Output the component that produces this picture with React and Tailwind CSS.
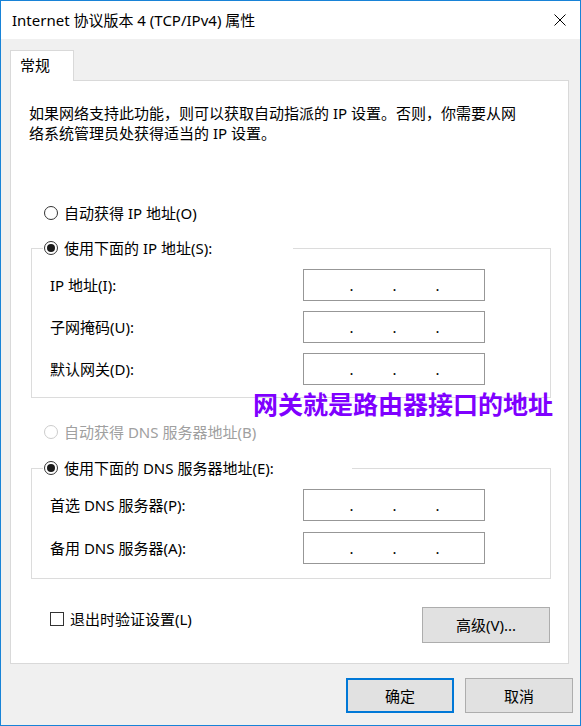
import React from 'react';

function Radio({ checked, disabled, label }) {
  return (
    <div className={`flex items-center h-[20px] ${disabled ? 'text-[#a0a0a0]' : 'text-black'}`}>
      <span
        className={`w-[14px] h-[14px] rounded-full border bg-white flex items-center justify-center ${disabled ? 'border-[#cccccc]' : 'border-[#333333]'}`}
      >
        {checked && <span className="w-[8px] h-[8px] rounded-full bg-[#1a1a1a]" />}
      </span>
      <span className="ml-[6px] whitespace-nowrap">{label}</span>
    </div>
  );
}

function IpBox() {
  return (
    <div className="w-[182px] h-[32px] border border-[#979797] bg-white flex items-center pl-[26px] leading-none">
      <span className="w-[43px] text-center">.</span>
      <span className="w-[43px] text-center">.</span>
      <span className="w-[43px] text-center">.</span>
    </div>
  );
}

function Row({ label }) {
  return (
    <div className="grid grid-cols-[253px_182px] items-center">
      <span className="whitespace-nowrap">{label}</span>
      <IpBox />
    </div>
  );
}

function Button({ children, primary, className = '' }) {
  return (
    <button
      className={`bg-[#e1e1e1] flex items-center justify-center text-black ${primary ? 'border-2 border-[#0078d7]' : 'border border-[#adadad]'} ${className}`}
    >
      {children}
    </button>
  );
}

export default function App() {
  return (
    <div className="relative w-[581px] h-[726px] border border-[#1883d7] bg-[#f0f0f0] flex flex-col text-[15px] leading-[20px] text-black font-['Noto_Sans','Noto_Sans_CJK_SC',sans-serif]">
      {/* Title bar */}
      <div className="h-[38px] bg-white flex items-center justify-between pl-[11px] pr-[14px]">
        <span className="whitespace-nowrap">Internet 协议版本 4 (TCP/IPv4) 属性</span>
        <svg width="12" height="12" viewBox="0 0 12 12" fill="none" stroke="#000" strokeWidth="1">
          <path d="M0.5 0.5 L11.5 11.5 M11.5 0.5 L0.5 11.5" />
        </svg>
      </div>

      {/* Body */}
      <div className="pt-[11px] pl-[9px] pr-[11px]">
        {/* Tab */}
        <div className="relative z-10 w-[64px] h-[31px] -mb-[1px] bg-white border-t border-l border-r border-[#d9d9d9] pl-[9px] pt-[4px]">
          常规
        </div>

        {/* Panel */}
        <div className="h-[584px] bg-white border border-[#d9d9d9] pt-[22px]">
          <p className="pl-[18px] whitespace-nowrap">
            如果网络支持此功能，则可以获取自动指派的 IP 设置。否则，你需要从网
            <br />
            络系统管理员处获得适当的 IP 设置。
          </p>

          <div className="mt-[60px] ml-[33px]">
            <Radio label="自动获得 IP 地址(O)" />
          </div>

          <fieldset className="mt-[15px] ml-[20px] w-[520px] border border-[#dcdcdc] pl-[18px] pb-[12px]">
            <legend className="-ml-[7px] w-[250px] pl-[1px]">
              <Radio checked label="使用下面的 IP 地址(S):" />
            </legend>
            <div className="mt-[11px] flex flex-col gap-[10px]">
              <Row label="IP 地址(I):" />
              <Row label="子网掩码(U):" />
              <Row label="默认网关(D):" />
            </div>
          </fieldset>

          <div className="mt-[24px] ml-[33px]">
            <Radio disabled label="自动获得 DNS 服务器地址(B)" />
          </div>

          <fieldset className="mt-[16px] ml-[20px] w-[520px] border border-[#dcdcdc] pl-[18px] pb-[14px]">
            <legend className="-ml-[7px] w-[309px] pl-[1px]">
              <Radio checked label="使用下面的 DNS 服务器地址(E):" />
            </legend>
            <div className="mt-[11px] flex flex-col gap-[11px]">
              <Row label="首选 DNS 服务器(P):" />
              <Row label="备用 DNS 服务器(A):" />
            </div>
          </fieldset>

          <div className="mt-[28px] flex justify-between items-start pl-[39px] pr-[18px]">
            <div className="mt-[2px] flex items-center h-[20px]">
              <span className="w-[14px] h-[14px] border border-[#333333] bg-white" />
              <span className="ml-[6px] whitespace-nowrap">退出时验证设置(L)</span>
            </div>
            <Button className="w-[128px] h-[36px]">高级(V)...</Button>
          </div>
        </div>
      </div>

      {/* Footer */}
      <div className="pt-[14px] pr-[7px] flex justify-end gap-[11px]">
        <Button primary className="w-[108px] h-[35px]">确定</Button>
        <Button className="w-[108px] h-[35px]">取消</Button>
      </div>

      {/* Annotation */}
      <div className="absolute left-[252px] top-[390px] text-[25px] leading-[25px] font-bold text-[#7f00ff] whitespace-nowrap font-['Noto_Sans_CJK_SC',sans-serif]">
        网关就是路由器接口的地址
      </div>
    </div>
  );
}
